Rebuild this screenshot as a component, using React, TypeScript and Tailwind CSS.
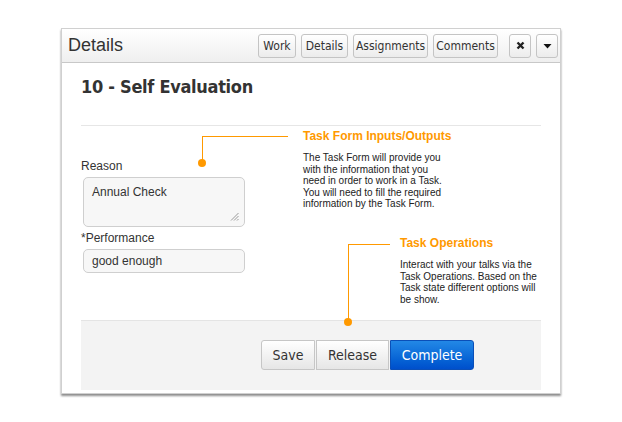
import React from "react";

const sans = { fontFamily: '"Liberation Sans", Arial, sans-serif' };
const cond = { fontFamily: '"DejaVu Sans Condensed", "DejaVu Sans", Tahoma, sans-serif' };

function HBtn({ children, className = "" }: { children: React.ReactNode; className?: string }) {
  return (
    <div
      className={`h-[24px] flex items-center justify-center rounded-[3px] border border-[#c4c4c4] bg-gradient-to-b from-white to-[#ececec] text-[12px] text-[#333] px-[4px] ${className}`}
      style={cond}
    >
      {children}
    </div>
  );
}

export default function App() {
  return (
    <div className="w-[622px] h-[422px] bg-white relative overflow-hidden">
      <div className="absolute left-[61px] top-[28px] w-[500px] h-[366px] border border-[#d0d0d0] bg-white shadow-[0_2px_2px_rgba(0,0,0,0.45)] flex flex-col">
        {/* header */}
        <div className="h-[34px] flex items-center pl-[6px] pr-[2px] border-b border-[#c8c8c8] bg-gradient-to-b from-white to-[#efefef]">
          <div className="text-[18px] text-[#333] flex-1" style={sans}>Details</div>
          <div className="flex items-center gap-[5px]">
            <HBtn className="w-[38px]">Work</HBtn>
            <HBtn className="w-[47px]">Details</HBtn>
            <HBtn className="w-[75px]">Assignments</HBtn>
            <HBtn className="w-[65px]">Comments</HBtn>
            <HBtn className="w-[22px] ml-[6px] !px-0">
              <svg width="9" height="9" viewBox="0 0 9 9">
                <path d="M1.5 1.5 L7.5 7.5 M7.5 1.5 L1.5 7.5" stroke="#222" strokeWidth="2.4" strokeLinecap="butt" />
              </svg>
            </HBtn>
            <HBtn className="w-[22px] !px-0">
              <svg width="9" height="6" viewBox="0 0 9 6">
                <path d="M0.5 1 L8.5 1 L4.5 5.5 Z" fill="#111" />
              </svg>
            </HBtn>
          </div>
        </div>
        {/* content */}
        <div className="px-[19px] flex flex-col">
          <div className="mt-[12px] text-[18px] leading-[24px] font-bold text-[#333] tracking-[-0.3px]" style={cond}>
            10 - Self Evaluation
          </div>
          <div className="mt-[26px] border-t border-[#e6e6e6]" />
          <div className="mt-[32px] text-[12px] leading-[16px] text-[#333]" style={sans}>Reason</div>
          <div className="mt-[3px] ml-[2px] w-[162px] h-[50px] rounded-[5px] border border-[#cfcfcf] bg-[#f7f7f7] relative px-[8px] pt-[5px] text-[12px] text-[#333]" style={sans}>
            Annual Check
            <svg className="absolute right-[5px] bottom-[5px]" width="9" height="9" viewBox="0 0 9 9">
              <path d="M8.5 1 L1 8.5 M8.5 4 L4 8.5 M8.5 7 L7 8.5" stroke="#999" strokeWidth="1" />
            </svg>
          </div>
          <div className="mt-[3px] text-[12px] leading-[16px] text-[#333]" style={sans}>*Performance</div>
          <div className="mt-[3px] ml-[2px] w-[162px] h-[24px] rounded-[5px] border border-[#cfcfcf] bg-[#f7f7f7] flex items-center px-[8px] text-[12px] text-[#333]" style={sans}>
            good enough
          </div>
          <div className="mt-[47px] h-[70px] bg-[#f3f3f3] border-t border-[#e4e4e4] flex items-start pl-[180px] pt-[19px]">
            <div className="h-[30px] w-[54px] flex items-center justify-center rounded-l-[3px] border border-[#c6c6c6] bg-gradient-to-b from-white to-[#e6e6e6] text-[14px] text-[#333]" style={cond}>Save</div>
            <div className="h-[30px] w-[73px] ml-[1px] flex items-center justify-center border border-[#c6c6c6] bg-gradient-to-b from-white to-[#e6e6e6] text-[14px] text-[#333]" style={cond}>Release</div>
            <div className="h-[30px] w-[84px] ml-[1px] flex items-center justify-center rounded-r-[3px] border border-[#0a4fb8] bg-gradient-to-b from-[#2388e6] to-[#004fcc] text-[14px] text-white" style={cond}>Complete</div>
          </div>
        </div>
      </div>

      {/* callout 1 */}
      <div className="absolute left-[202px] top-[136px] w-[86px] h-[26px] border-l-[1.5px] border-t-[1.5px] border-[#f90]" />
      <div className="absolute left-[198px] top-[159px] w-[8px] h-[8px] rounded-full bg-[#f90]" />
      <div className="absolute left-[303px] top-[128px] w-[160px]" style={sans}>
        <div className="text-[12px] font-bold text-[#f90] leading-[16px]">Task Form Inputs/Outputs</div>
        <div className="mt-[8px] text-[10px] leading-[11.5px] text-[#222]">
          The Task Form will provide you<br />with the information that you<br />need in order to work in a Task.<br />You will need to fill the required<br />information by the Task Form.
        </div>
      </div>

      {/* callout 2 */}
      <div className="absolute left-[348px] top-[244px] w-[42px] h-[76px] border-l-[1.5px] border-t-[1.5px] border-[#f90]" />
      <div className="absolute left-[344px] top-[318px] w-[8px] h-[8px] rounded-full bg-[#f90]" />
      <div className="absolute left-[400px] top-[235px] w-[160px]" style={sans}>
        <div className="text-[12px] font-bold text-[#f90] leading-[16px]">Task Operations</div>
        <div className="mt-[8px] text-[10px] leading-[11.5px] text-[#222]">
          Interact with your talks via the<br />Task Operations. Based on the<br />Task state different options will<br />be show.
        </div>
      </div>
    </div>
  );
}
